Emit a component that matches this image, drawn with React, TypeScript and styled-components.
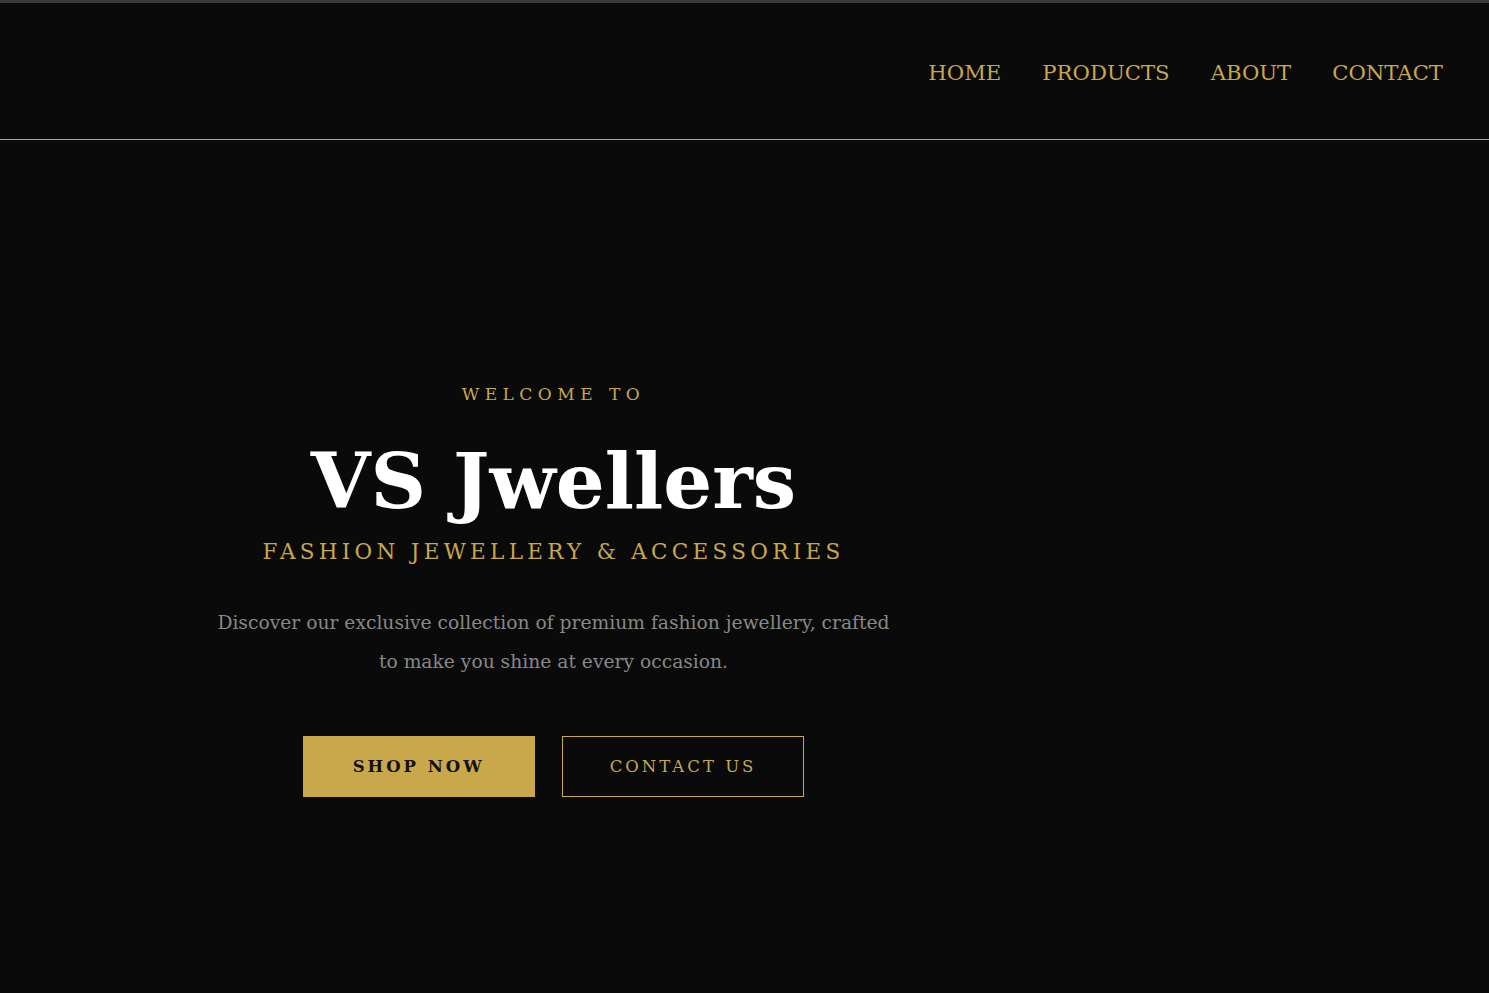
import styled, { createGlobalStyle } from "styled-components";

const gold = "#c9a84c";

const GlobalStyle = createGlobalStyle`
  html, body {
    margin: 0;
    padding: 0;
    background: #0a0a0a;
  }
  body {
    border-top: 3px solid #3b3b3b;
    font-family: "DejaVu Serif", Georgia, serif;
  }
  * {
    box-sizing: border-box;
  }
`;

const Page = styled.div`
  min-height: 990px;
  background: #0a0a0a;
  display: flex;
  flex-direction: column;
`;

const Header = styled.header`
  height: 137px;
  display: flex;
  align-items: center;
  justify-content: space-between;
  padding: 0 46px 0 48px;
  border-bottom: 1px solid ${gold};
`;

const Logo = styled.div`
  width: 120px;
`;

const Nav = styled.nav`
  display: flex;
  gap: 41px;
  margin-top: 2px;
`;

const NavLink = styled.a`
  color: ${gold};
  font-size: 21.2px;
  text-decoration: none;
  text-transform: uppercase;
  cursor: pointer;
`;

const Hero = styled.section`
  flex: 1;
  display: grid;
  grid-template-columns: 1107px 1fr;
`;

const HeroContent = styled.div`
  display: flex;
  flex-direction: column;
  align-items: center;
  text-align: center;
  padding-top: 244px;
`;

const Eyebrow = styled.p`
  margin: 0;
  color: ${gold};
  font-size: 17px;
  line-height: 20px;
  letter-spacing: 5.5px;
  text-transform: uppercase;
`;

const Title = styled.h1`
  margin: 33px 0 0;
  color: #ffffff;
  font-size: 77px;
  font-weight: 700;
  line-height: 88px;
`;

const Tagline = styled.h2`
  margin: 14px 0 0;
  color: ${gold};
  font-size: 21.5px;
  line-height: 26px;
  font-weight: 400;
  letter-spacing: 4.3px;
  text-transform: uppercase;
`;

const Description = styled.p`
  margin: 38px 0 0;
  max-width: 690px;
  color: #888888;
  font-size: 18.7px;
  line-height: 39px;
`;

const Actions = styled.div`
  display: flex;
  gap: 27px;
  margin-top: 55px;
`;

const Button = styled.button<{ $filled?: boolean }>`
  height: 61px;
  padding: 0 ${(p) => (p.$filled ? 49 : 47)}px;
  font-family: inherit;
  font-size: 16.5px;
  letter-spacing: 3px;
  text-transform: uppercase;
  cursor: pointer;
  font-weight: ${(p) => (p.$filled ? 700 : 400)};
  color: ${(p) => (p.$filled ? "#111" : gold)};
  background: ${(p) => (p.$filled ? gold : "transparent")};
  border: 1px solid ${gold};
`;

const HeroSide = styled.div``;

const navItems = ["Home", "Products", "About", "Contact"];

const App = () => {
  return (
    <>
      <GlobalStyle />
      <Page>
        <Header>
          <Logo />
          <Nav>
            {navItems.map((item) => (
              <NavLink key={item}>{item}</NavLink>
            ))}
          </Nav>
        </Header>
        <Hero>
          <HeroContent>
            <Eyebrow>Welcome to</Eyebrow>
            <Title>VS Jwellers</Title>
            <Tagline>Fashion Jewellery &amp; Accessories</Tagline>
            <Description>
              Discover our exclusive collection of premium fashion jewellery,
              crafted to make you shine at every occasion.
            </Description>
            <Actions>
              <Button $filled>Shop Now</Button>
              <Button>Contact Us</Button>
            </Actions>
          </HeroContent>
          <HeroSide />
        </Hero>
      </Page>
    </>
  );
};

export default App;
